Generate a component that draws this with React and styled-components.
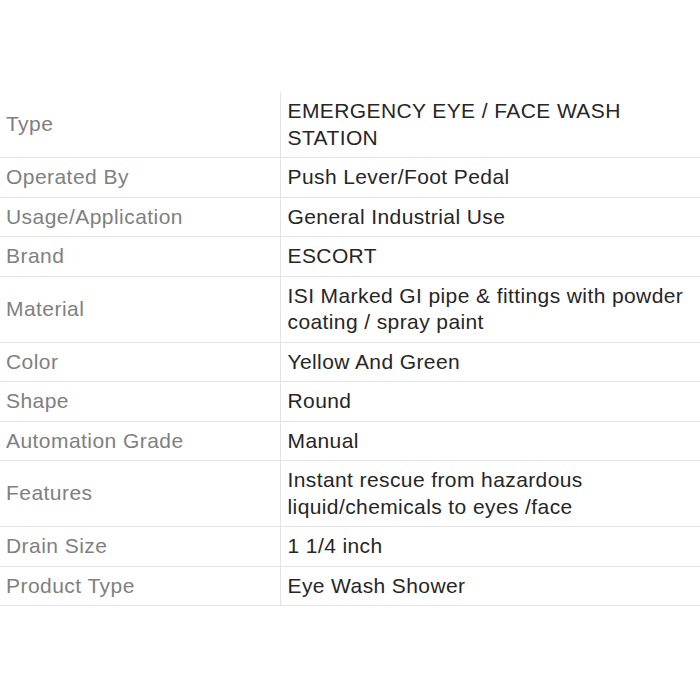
import React from "react";
import styled, { createGlobalStyle } from "styled-components";

const GlobalStyle = createGlobalStyle`
    body {
        margin: 0;
        background: #fff;
        font-family: "Liberation Sans", Arial, sans-serif;
    }
`;

const Page = styled.div`
    width: 700px;
    height: 700px;
    padding-top: 92px;
    box-sizing: border-box;
    background: #fff;
`;

const Table = styled.table`
    width: 700px;
    border-collapse: collapse;
    table-layout: fixed;
`;

const Row = styled.tr`
    border-bottom: 1px solid #e3e3e3;
`;

const Label = styled.td`
    width: 280px;
    box-sizing: border-box;
    padding: 6px 6px;
    border-right: 1px solid #e3e3e3;
    color: #808080;
    font-size: 21px;
    line-height: 26.5px;
    letter-spacing: 0.45px;
    vertical-align: middle;
`;

const Value = styled.td`
    padding: 6px 8px 6px 7px;
    color: #262626;
    font-size: 21px;
    line-height: 26.5px;
    letter-spacing: 0.4px;
    vertical-align: middle;
`;

const specs = [
    ["Type", "EMERGENCY EYE / FACE WASH STATION"],
    ["Operated By", "Push Lever/Foot Pedal"],
    ["Usage/Application", "General Industrial Use"],
    ["Brand", "ESCORT"],
    ["Material", "ISI Marked GI pipe & fittings with powder coating / spray paint"],
    ["Color", "Yellow And Green"],
    ["Shape", "Round"],
    ["Automation Grade", "Manual"],
    ["Features", "Instant rescue from hazardous liquid/chemicals to eyes /face"],
    ["Drain Size", "1 1/4 inch"],
    ["Product Type", "Eye Wash Shower"],
];

const App = () => {
    return (
        <Page>
            <GlobalStyle />
            <Table>
                <tbody>
                    {specs.map(([label, value]) => (
                        <Row key={label}>
                            <Label>{label}</Label>
                            <Value>{value}</Value>
                        </Row>
                    ))}
                </tbody>
            </Table>
        </Page>
    );
};

export default App;
